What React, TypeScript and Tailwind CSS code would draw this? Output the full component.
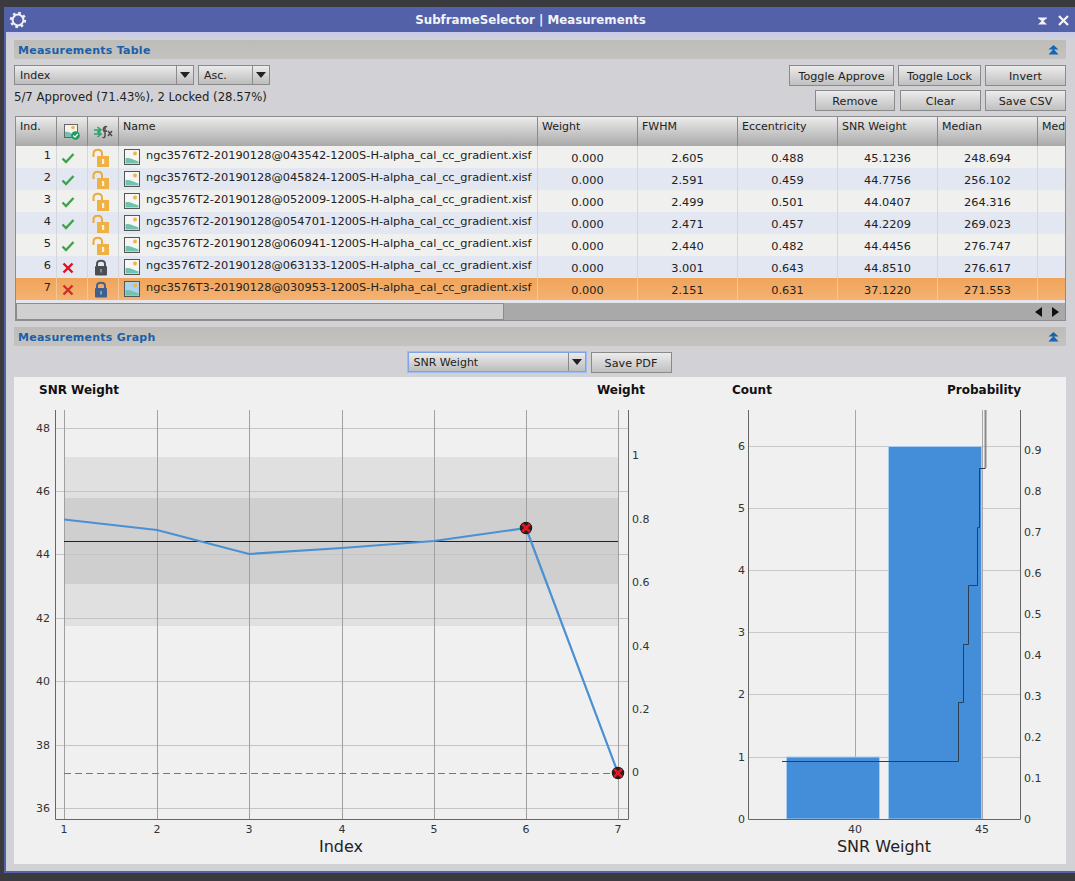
const uiFont = "font-['DejaVu_Sans',sans-serif]";

const rows = [
  { ind: 1, ok: true, locked: false, name: 'ngc3576T2-20190128@043542-1200S-H-alpha_cal_cc_gradient.xisf', v: ['0.000', '2.605', '0.488', '45.1236', '248.694'] },
  { ind: 2, ok: true, locked: false, name: 'ngc3576T2-20190128@045824-1200S-H-alpha_cal_cc_gradient.xisf', v: ['0.000', '2.591', '0.459', '44.7756', '256.102'] },
  { ind: 3, ok: true, locked: false, name: 'ngc3576T2-20190128@052009-1200S-H-alpha_cal_cc_gradient.xisf', v: ['0.000', '2.499', '0.501', '44.0407', '264.316'] },
  { ind: 4, ok: true, locked: false, name: 'ngc3576T2-20190128@054701-1200S-H-alpha_cal_cc_gradient.xisf', v: ['0.000', '2.471', '0.457', '44.2209', '269.023'] },
  { ind: 5, ok: true, locked: false, name: 'ngc3576T2-20190128@060941-1200S-H-alpha_cal_cc_gradient.xisf', v: ['0.000', '2.440', '0.482', '44.4456', '276.747'] },
  { ind: 6, ok: false, locked: true, name: 'ngc3576T2-20190128@063133-1200S-H-alpha_cal_cc_gradient.xisf', v: ['0.000', '3.001', '0.643', '44.8510', '276.617'] },
  { ind: 7, ok: false, locked: true, name: 'ngc3576T3-20190128@030953-1200S-H-alpha_cal_cc_gradient.xisf', v: ['0.000', '2.151', '0.631', '37.1220', '271.553'] },
];

const gridCols = 'grid grid-cols-[41px_31px_31px_419px_100px_100px_100px_100px_100px_27px]';

function Check() {
  return (
    <svg width="14" height="12" viewBox="0 0 14 12">
      <path d="M1.5 6.5 L5 10 L12.5 2" fill="none" stroke="#3fa34d" strokeWidth="2.4" />
    </svg>
  );
}

function Cross({ muted }: { muted?: boolean }) {
  return (
    <svg width="12" height="12" viewBox="0 0 12 12">
      <path d="M1.5 1.5 L10.5 10.5 M10.5 1.5 L1.5 10.5" stroke={muted ? '#cc2f2a' : '#e01020'} strokeWidth="2.4" />
    </svg>
  );
}

function OpenLock() {
  return (
    <svg width="18" height="20" viewBox="0 0 18 20">
      <path d="M1.5 9 V5.5 C1.5 0.5 10 0.5 10 5.5 V8" fill="none" stroke="#efa93b" strokeWidth="2" />
      <rect x="5" y="8" width="12" height="11" fill="#efb044" />
      <rect x="10" y="11" width="2.2" height="5" fill="#fff3d8" />
    </svg>
  );
}

function ClosedLock({ selected }: { selected?: boolean }) {
  return (
    <svg width="14" height="17" viewBox="0 0 14 17">
      <path d="M3 8 V5 C3 0.8 11 0.8 11 5 V8" fill="none" stroke={selected ? '#46608a' : '#4d5156'} strokeWidth="2" />
      <rect x="1" y="7" width="12" height="9.5" rx="1" fill={selected ? '#3f5f8f' : '#4a4e52'} />
      <rect x="6" y="10" width="2" height="3.5" fill={selected ? '#7fa0cc' : '#8a8e92'} />
    </svg>
  );
}

function Thumb({ selected }: { selected?: boolean }) {
  return (
    <svg width="16" height="16" viewBox="0 0 16 16">
      <rect x="0.5" y="0.5" width="15" height="15" fill={selected ? '#a9d3ee' : '#f6f6f4'} stroke="#555" />
      <circle cx="11" cy="4.5" r="2" fill="#eeb64c" />
      <path d="M1.5 14.5 V9.5 C5 8 9 11 14.5 12.5 V14.5 Z" fill="#6fc2ae" />
    </svg>
  );
}

function Caret() {
  return (
    <svg width="10" height="6" viewBox="0 0 10 6">
      <path d="M0 0 H10 L5 6 Z" fill="#222" />
    </svg>
  );
}

function Collapse() {
  return (
    <svg width="11" height="10" viewBox="0 0 11 10">
      <path d="M5.5 0 L10.5 4.5 H0.5 Z M5.5 4 L10.5 9.5 H0.5 Z" fill="#1565b0" />
    </svg>
  );
}

function SectionHeader({ title }: { title: string }) {
  return (
    <div className="flex h-[19px] items-center justify-between bg-gradient-to-b from-[#bdbcb8] to-[#c4c3bf] pl-1 pr-[7px]">
      <span className="pt-[3px] text-[11px] font-bold tracking-[0.25px] text-[#1a5fa8]">{title}</span>
      <Collapse />
    </div>
  );
}

function Combo({ label, width, focus }: { label: string; width: string; focus?: boolean }) {
  return (
    <div
      className={`${width} flex h-[20px] items-center justify-between border bg-gradient-to-b from-[#ebebeb] to-[#bdbdbd] text-[11px] text-[#222] ${
        focus ? 'border-[#7da4e8] ring-1 ring-[#9dbcf0]' : 'border-[#8a8a8a]'
      }`}
    >
      <span className="pl-[5px] pt-[3px]">{label}</span>
      <span className="flex h-full w-[17px] items-center justify-center border-l border-[#8a8a8a]">
        <Caret />
      </span>
    </div>
  );
}

function Btn({ label, width }: { label: string; width: string }) {
  return (
    <div
      className={`${width} flex h-[21px] items-center justify-center border border-[#8a8a8a] bg-gradient-to-b from-[#ececec] to-[#c0c0c0] pt-[3px] text-[11.2px] text-[#222]`}
    >
      {label}
    </div>
  );
}

function SnrChart() {
  const xs = [64, 157, 249, 342, 434, 526, 618];
  const ticks: [string, number][] = [['48', 428], ['46', 491], ['44', 554], ['42', 618], ['40', 681], ['38', 745], ['36', 808]];
  const wTicks: [string, number][] = [['1', 455], ['0.8', 519], ['0.6', 582], ['0.4', 646], ['0.2', 709], ['0', 772]];
  const Marker = ({ x, y }: { x: number; y: number }) => (
    <g>
      <circle cx={x} cy={y} r="5.6" fill="#2c2226" stroke="#1c1c1c" strokeWidth="1.2" />
      <path d={`M${x - 3.8} ${y - 3.8} L${x + 3.8} ${y + 3.8} M${x + 3.8} ${y - 3.8} L${x - 3.8} ${y + 3.8}`} stroke="#f01220" strokeWidth="2.6" />
    </g>
  );
  return (
    <svg width="666" height="487" viewBox="14 377 666 487" className="shrink-0">
      <text x="39" y="394" fontSize="12" fontWeight="700" fill="#111">SNR Weight</text>
      <text x="597" y="394" fontSize="12" fontWeight="700" fill="#111">Weight</text>
      <rect x="64" y="457" width="554" height="169" fill="#e0e0e0" />
      <rect x="64" y="498" width="554" height="86" fill="#cfcfcf" />
      {ticks.map(([t, y]) => (
        <g key={t}>
          <line x1="55" x2="628" y1={y + 0.5} y2={y + 0.5} stroke="#c4c4c4" />
          <text x="50" y={y + 4} fontSize="11" fill="#333" textAnchor="end">{t}</text>
        </g>
      ))}
      {xs.map((x, i) => (
        <g key={x}>
          <line x1={x + 0.5} x2={x + 0.5} y1="410" y2="819" stroke="#a0a0a0" />
          <text x={x} y="833" fontSize="11" fill="#333" textAnchor="middle">{i + 1}</text>
        </g>
      ))}
      <line x1="64" x2="618" y1="541.5" y2="541.5" stroke="#222" />
      <line x1="64" x2="618" y1="773.5" y2="773.5" stroke="#777" strokeDasharray="7 4" />
      <polyline points="64,519.5 157,530 249,554 342,548 434,541 526,528 618,773" fill="none" stroke="#4a90d2" strokeWidth="2.2" />
      <Marker x={526} y={528} />
      <Marker x={618} y={773} />
      <path d="M55.5 410 V819.5 H628.5 V410" fill="none" stroke="#666" />
      {wTicks.map(([t, y]) => (
        <text key={t} x="632" y={y + 4} fontSize="11" fill="#333">{t}</text>
      ))}
      <text x="341" y="852" fontSize="16" fill="#222" textAnchor="middle">Index</text>
    </svg>
  );
}

function HistogramChart() {
  const counts: [string, number][] = [['0', 819], ['1', 757], ['2', 694], ['3', 632], ['4', 570], ['5', 508], ['6', 446]];
  const probs: [string, number][] = [['0', 819], ['0.1', 778], ['0.2', 737], ['0.3', 696], ['0.4', 655], ['0.5', 614], ['0.6', 573], ['0.7', 532], ['0.8', 491], ['0.9', 450]];
  return (
    <svg width="386" height="487" viewBox="680 377 386 487" className="shrink-0">
      <text x="732" y="394" fontSize="12" fontWeight="700" fill="#111">Count</text>
      <text x="947" y="394" fontSize="12" fontWeight="700" fill="#111">Probability</text>
      {counts.slice(1).map(([t, y]) => (
        <line key={t} x1="748" x2="1020" y1={y + 0.5} y2={y + 0.5} stroke="#c8c8c8" />
      ))}
      <line x1="855.5" x2="855.5" y1="410" y2="819" stroke="#a8a8a8" />
      <line x1="982.5" x2="982.5" y1="410" y2="819" stroke="#a8a8a8" />
      <rect x="786.5" y="757" width="93" height="62" fill="#438dd9" stroke="#a8cdf0" />
      <rect x="888.5" y="446.5" width="93" height="372.5" fill="#438dd9" stroke="#a8cdf0" />
      <polyline
        points="782,761.5 958.5,761.5 958.5,702.5 963.5,702.5 963.5,644.5 968.5,644.5 968.5,585.5 977.5,585.5 977.5,527.5 979.5,527.5 979.5,468.5 985.5,468.5"
        fill="none"
        stroke="#2c3e50"
      />
      <line x1="985.5" x2="985.5" y1="410" y2="468" stroke="#8a8a8a" strokeWidth="2" />
      <path d="M748.5 410 V819.5 H1020.5 V410" fill="none" stroke="#666" />
      {counts.map(([t, y]) => (
        <text key={t} x="745" y={y + 4} fontSize="11" fill="#333" textAnchor="end">{t}</text>
      ))}
      {probs.map(([t, y]) => (
        <text key={t} x="1024" y={y + 4} fontSize="11" fill="#333">{t}</text>
      ))}
      <text x="855" y="833" fontSize="11" fill="#333" textAnchor="middle">40</text>
      <text x="982" y="833" fontSize="11" fill="#333" textAnchor="middle">45</text>
      <text x="884" y="852" fontSize="16" fill="#222" textAnchor="middle">SNR Weight</text>
    </svg>
  );
}

export default function App() {
  return (
    <div className={`${uiFont} h-[881px] w-[1075px] overflow-hidden bg-[#3b3a3e] pl-1 pt-[7px]`}>
      <div className="h-[866px] border-b-2 border-l-2 border-[#5361a9] bg-[#d2d2d6]">
        {/* title bar */}
        <div className="relative flex h-[25px] items-center justify-center bg-[#5361a9]">
          <svg width="18" height="18" viewBox="0 0 18 18" className="absolute left-[3px] top-[4px]">
            <circle cx="9" cy="9" r="5.4" fill="none" stroke="#eef0f6" strokeWidth="2" />
            <circle cx="9" cy="9" r="7" fill="none" stroke="#eef0f6" strokeWidth="2.4" strokeDasharray="2.6 2.9" />
          </svg>
          <span className="ml-[-20px] pt-[2px] text-[11.8px] font-bold text-[#f2f3f8]">SubframeSelector | Measurements</span>
          <svg width="9" height="8" viewBox="0 0 10 8" className="absolute left-[1032px] top-[10px]">
            <path d="M0 0 H10 V1 L6 4 L10 8 H0 L4 4 L0 1 Z" fill="#f2f3f8" />
          </svg>
          <svg width="11" height="11" viewBox="0 0 11 11" className="absolute left-[1052px] top-[8px]">
            <path d="M1 1 L10 10 M10 1 L1 10" stroke="#f4f5fa" strokeWidth="2.2" />
          </svg>
        </div>

        <div className="bg-gradient-to-b from-[#c9cbea] from-0% to-[#d2d2d6] to-[1%] pb-[7px] pl-2 pr-[9px] pt-2">
          <SectionHeader title="Measurements Table" />

          <div className="mt-[6px] flex h-[47px] justify-between">
            <div>
              <div className="flex gap-[4px]">
                <Combo label="Index" width="w-[180px]" />
                <Combo label="Asc." width="w-[72px]" />
              </div>
              <div className="mt-[5px] text-[11.7px] leading-[14px] text-[#222]">
                5/7 Approved (71.43%), 2 Locked (28.57%)
              </div>
            </div>
            <div className="flex flex-col items-end gap-[4px]">
              <div className="flex gap-[4px]">
                <Btn label="Toggle Approve" width="w-[105px]" />
                <Btn label="Toggle Lock" width="w-[83px]" />
                <Btn label="Invert" width="w-[81px]" />
              </div>
              <div className="flex gap-[4px]">
                <Btn label="Remove" width="mr-px w-[80px]" />
                <Btn label="Clear" width="w-[81px]" />
                <Btn label="Save CSV" width="w-[81px]" />
              </div>
            </div>
          </div>

          {/* table */}
          <div className="mx-px mt-1 h-[205px] w-[1051px] overflow-hidden border border-[#8c8c8c] bg-[#e6e6ea]">
            <div className={`${gridCols} h-[29px] bg-gradient-to-b from-[#ececec] to-[#a9a9a9] text-[11px] text-[#222]`}>
              <div className="border-r border-[#8a8a8a] pl-1 pt-[2px]">Ind.</div>
              <div className="flex items-center justify-center border-r border-[#8a8a8a]">
                <svg width="16" height="16" viewBox="0 0 16 16">
                  <rect x="0.5" y="0.5" width="13" height="13" fill="#f3f3f1" stroke="#666" />
                  <circle cx="9" cy="3.5" r="1.8" fill="#eeb64c" />
                  <path d="M1 13 V8 C4 7 6 9 9 10 V13 Z" fill="#6fc2ae" />
                  <circle cx="11.5" cy="11.5" r="4.3" fill="#1f9a5e" />
                  <path d="M9.3 11.5 L11 13.2 L13.8 10" fill="none" stroke="#fff" strokeWidth="1.2" />
                </svg>
              </div>
              <div className="flex items-center justify-center border-r border-[#8a8a8a]">
                <svg width="19" height="14" viewBox="0 0 19 14">
                  <path d="M0 5 H6 M3.5 2 L7 5 L3.5 8 M0 9 H6 M3.5 6 L7 9 L3.5 12" fill="none" stroke="#2fa36b" strokeWidth="1.6" />
                  <path d="M9 5 C10 1 12 1 13 2 M11 2 L11 11 C11 13 9 13 9 12 M9 6 H13 M14 6 L18 11 M18 6 L14 11" fill="none" stroke="#4a4a4a" strokeWidth="1.4" />
                </svg>
              </div>
              {['Name', 'Weight', 'FWHM', 'Eccentricity', 'SNR Weight', 'Median'].map((h) => (
                <div key={h} className="border-r border-[#8a8a8a] pl-[4px] pt-[2px]">{h}</div>
              ))}
              <div className="pl-[4px] pt-[2px]">Med</div>
            </div>

            {rows.map((r) => {
              const selected = r.ind === 7;
              const stripe = selected
                ? 'bg-gradient-to-b from-[#efa45a] to-[#f6b272]'
                : r.ind % 2 === 1
                  ? 'bg-[#f0f0ee]'
                  : 'bg-[#e3e7f1]';
              const line = selected ? 'border-[#f3c79a]' : 'border-[#d4d6dc]';
              return (
                <div key={r.ind} className={`${gridCols} h-[22px] text-[11.35px] leading-[14px] text-[#222] ${stripe}`}>
                  <div className={`border-r pr-[5px] pt-[2px] text-right ${line}`}>{r.ind}</div>
                  <div className={`flex items-center justify-center border-r pr-2 pt-[1px] ${line}`}>
                    {r.ok ? <Check /> : <Cross muted={selected} />}
                  </div>
                  <div className={`flex items-center justify-center border-r pr-1 pt-[1px] ${line}`}>
                    {r.locked ? <ClosedLock selected={selected} /> : <OpenLock />}
                  </div>
                  <div className={`flex items-start gap-[6px] overflow-hidden whitespace-nowrap border-r pl-[5px] ${line}`}>
                    <span className="mt-[3px] shrink-0"><Thumb selected={selected} /></span>
                    <span className="pt-[2px]">{r.name}</span>
                  </div>
                  {r.v.map((val, i) => (
                    <div key={i} className={`border-r pt-[5px] text-center ${line}`}>{val}</div>
                  ))}
                  <div />
                </div>
              );
            })}

            <div className="mt-[3px] flex h-[17px] items-stretch bg-[#a9a9a9]">
              <div className="w-[488px] border border-[#8c8c8c] bg-[#d0d0d0]" />
              <div className="flex-1" />
              <div className="flex w-[30px] items-center justify-between pr-[6px]">
                <svg width="7" height="10" viewBox="0 0 7 10"><path d="M7 0 V10 L0 5 Z" fill="#111" /></svg>
                <svg width="7" height="10" viewBox="0 0 7 10"><path d="M0 0 V10 L7 5 Z" fill="#111" /></svg>
              </div>
            </div>
          </div>

          <div className="mt-[6px]">
            <SectionHeader title="Measurements Graph" />
          </div>

          <div className="mt-[6px] flex h-[21px] justify-center gap-[5px] pr-px">
            <Combo label="SNR Weight" width="w-[178px]" focus />
            <Btn label="Save PDF" width="w-[81px]" />
          </div>

          <div className="mt-1 flex h-[487px] bg-[#f0f0f1]">
            <SnrChart />
            <HistogramChart />
          </div>
        </div>
      </div>
    </div>
  );
}
